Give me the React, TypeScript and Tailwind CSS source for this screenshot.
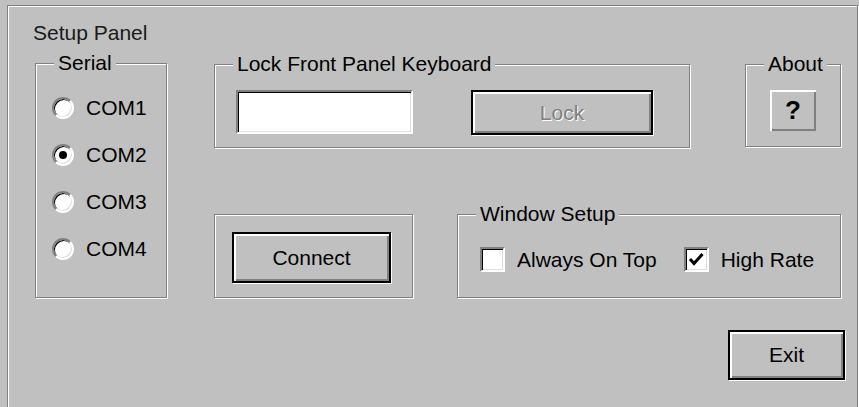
import React from 'react';

// etched frame used by every group box
const etched = 'border border-[#808080] shadow-[inset_1px_1px_0_#fff,1px_1px_0_#fff]';
// default push button: black rim + raised bevel
const pushButton =
  'flex items-center justify-center border-2 border-black bg-[#c0c0c0] shadow-[inset_2px_2px_0_#fff,inset_-2px_-2px_0_#808080,1px_1px_0_#fff]';
const sunken =
  'border-2 border-t-[#808080] border-l-[#808080] border-r-white border-b-white bg-white shadow-[inset_1px_1px_0_#000,inset_-1px_-1px_0_#dfdfdf]';

type GroupProps = {
  label?: string;
  className?: string;
  children?: React.ReactNode;
};

const Group = ({ label, className = '', children }: GroupProps) => (
  <div className={`relative ${etched} ${className}`}>
    {label && (
      <span className="absolute -top-[13px] left-[18px] bg-[#c0c0c0] px-[4px] leading-[24px]">
        {label}
      </span>
    )}
    {children}
  </div>
);

const Radio = ({ label, checked = false }: { label: string; checked?: boolean }) => (
  <div className="flex h-[47px] items-center">
    <div
      className={`flex h-[22px] w-[22px] items-center justify-center rounded-full ${sunken}`}
    >
      {checked && <div className="h-[8px] w-[8px] rounded-full bg-black" />}
    </div>
    <span className="ml-[12px] leading-[24px]">{label}</span>
  </div>
);

const Checkbox = ({ label, checked = false }: { label: string; checked?: boolean }) => (
  <div className="flex items-center">
    <div className={`flex h-[25px] w-[25px] items-center justify-center ${sunken}`}>
      {checked && (
        <svg width="17" height="17" viewBox="0 0 17 17">
          <path d="M2 8 L6 12.5 L14.5 3" fill="none" stroke="#000" strokeWidth="3" />
        </svg>
      )}
    </div>
    <span className="ml-[12px] leading-[24px]">{label}</span>
  </div>
);

const App = () => {
  return (
    <div className="h-[407px] w-[859px] overflow-hidden bg-[#c0c0c0] font-['Liberation_Sans',Arial,sans-serif] text-[21px] text-black">
      {/* Outer panel frame */}
      <div className={`ml-[7px] mt-[5px] flex h-[430px] w-[851px] pl-[27px] pt-[15px] ${etched}`}>
        {/* Left column: title + serial port choice */}
        <div className="w-[132px] shrink-0">
          <div className="-ml-[2px] h-[24px] leading-[24px] text-[#1a1a1a]">Setup Panel</div>
          <Group label="Serial" className="mt-[18px] h-[235px] pl-[16px] pt-[20px]">
            <Radio label="COM1" />
            <Radio label="COM2" checked />
            <Radio label="COM3" />
            <Radio label="COM4" />
          </Group>
        </div>

        {/* Right column */}
        <div className="ml-[47px] mt-[43px]">
          <div className="flex">
            <Group label="Lock Front Panel Keyboard" className="flex h-[84px] w-[476px] items-start pl-[21px] pt-[25px]">
              <div className={`h-[44px] w-[177px] ${sunken}`} />
              <button className={`ml-[58px] h-[45px] w-[182px] ${pushButton}`}>
                <span className="text-[#808080] [text-shadow:1px_1px_0_#fff]">Lock</span>
              </button>
            </Group>
            <Group label="About" className="ml-[55px] flex h-[83px] w-[96px] justify-center pt-[25px]">
              <button className="flex h-[41px] w-[46px] items-center justify-center bg-[#c0c0c0] text-[26px] font-bold shadow-[inset_2px_2px_0_#fff,inset_-2px_-2px_0_#808080]">
                ?
              </button>
            </Group>
          </div>

          <div className="mt-[66px] flex">
            <Group className="h-[84px] w-[199px] pl-[17px] pt-[17px]">
              <button className={`h-[51px] w-[159px] ${pushButton}`}>Connect</button>
            </Group>
            <Group label="Window Setup" className="ml-[44px] flex h-[84px] w-[384px] items-start pl-[22px] pt-[32px]">
              <Checkbox label="Always On Top" />
              <div className="ml-[27px]">
                <Checkbox label="High Rate" checked />
              </div>
            </Group>
          </div>

          <div className="mt-[32px] flex">
            <button className={`ml-[514px] h-[50px] w-[117px] ${pushButton}`}>Exit</button>
          </div>
        </div>
      </div>
    </div>
  );
};

export default App;
